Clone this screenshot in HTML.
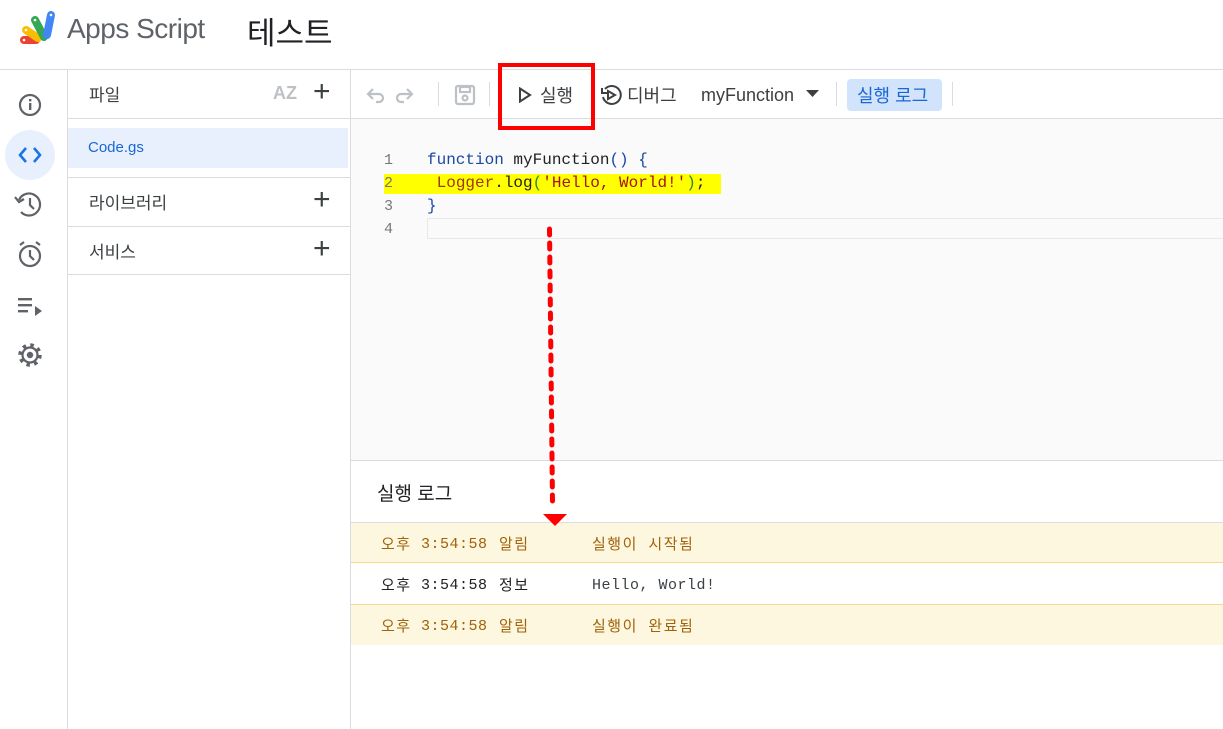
<!DOCTYPE html>
<html><head><meta charset="utf-8"><style>
*{margin:0;padding:0;box-sizing:border-box}
body{width:1223px;height:729px;overflow:hidden;background:#fff;font-family:"Liberation Sans","Noto Sans CJK KR",sans-serif;color:#3c4043;position:relative}
.a{position:absolute}
.mono{font-family:"Liberation Mono","Noto Sans CJK KR",monospace}
.lg{font-size:15px;letter-spacing:1.5px;white-space:pre}
.t{font-size:15px;letter-spacing:0.5px;margin-top:3px}
</style></head><body>
<!-- header -->
<svg class="a" style="left:18px;top:10px" width="44" height="36" viewBox="0 0 44 36">
<g stroke-linecap="round" stroke-width="8" fill="none">
<path d="M6 30h12" stroke="#ea4335"/>
<path d="M8 20l12 8" stroke="#fbbc04"/>
<path d="M17 10l9 17" stroke="#34a853"/>
<path d="M33 5l-4 20" stroke="#4285f4"/>
</g>
<g fill="#fff"><circle cx="6" cy="30" r="1.3"/><circle cx="8" cy="20" r="1.3"/><circle cx="17" cy="10" r="1.3"/><circle cx="33" cy="5" r="1.3"/></g>
</svg>
<div class="a" style="left:67px;top:13px;font-size:28px;color:#5f6368;letter-spacing:-0.5px">Apps Script</div>
<div class="a" style="left:247px;top:8px;font-size:31px;color:#202124">테스트</div>
<div class="a" style="left:0;top:69px;width:1223px;height:1px;background:#dadce0"></div>
<!-- rail -->
<div class="a" style="left:67px;top:69px;width:1px;height:660px;background:#dadce0"></div>
<svg class="a" style="left:0;top:70px" width="67" height="310">
<g fill="none" stroke="#5f6368" stroke-width="2.2">
<circle cx="30" cy="35" r="10"/>
<circle cx="30" cy="186" r="10"/><path d="M30 180v6l4 4M20 175l4-3M40 175l-4-3"/>
<path d="M30 128v7l4 4"/>
<path d="M19 130 A11 11 0 1 1 21 142"/>
</g>
<path d="M15 127l4 5 5-3" fill="none" stroke="#5f6368" stroke-width="2.2"/>
<rect x="29" y="33" width="2.4" height="7" fill="#5f6368"/><rect x="29" y="29" width="2.4" height="2.4" fill="#5f6368"/>
<circle cx="30" cy="85" r="25" fill="#e8f0fe"/>
<path d="M26 78l-6 7 6 7M34 78l6 7-6 7" fill="none" stroke="#1a73e8" stroke-width="2.6"/>
<g fill="#5f6368"><rect x="18" y="228" width="14" height="2.4"/><rect x="18" y="234" width="14" height="2.4"/><rect x="18" y="240" width="10" height="2.4"/><path d="M35 236l7 5-7 5z"/></g>
<g transform="translate(30 285)"><circle r="10" fill="none" stroke="#5f6368" stroke-width="3.5" stroke-dasharray="3.5 4.35"/><circle r="7.5" fill="none" stroke="#5f6368" stroke-width="2.2"/><circle r="3.2" fill="#5f6368"/></g>
</svg>
<!-- file panel -->
<div class="a" style="left:350px;top:69px;width:1px;height:660px;background:#dadce0"></div>
<div class="a" style="left:89px;top:81px;font-size:17px;color:#3c4043">파일</div>
<div class="a" style="left:273px;top:83px;font-size:18px;font-weight:bold;color:#bdc1c6">AZ</div>
<div class="a" style="left:313px;top:75px;font-size:30px;color:#3c4043;font-weight:300">+</div>
<div class="a" style="left:68px;top:118px;width:282px;height:1px;background:#dadce0"></div>
<div class="a" style="left:68px;top:128px;width:280px;height:40px;background:#e8f0fe"></div>
<div class="a" style="left:88px;top:139px;font-size:15px;color:#1967d2">Code.gs</div>
<div class="a" style="left:68px;top:177px;width:282px;height:1px;background:#dadce0"></div>
<div class="a" style="left:89px;top:189px;font-size:17px">라이브러리</div>
<div class="a" style="left:313px;top:183px;font-size:30px">+</div>
<div class="a" style="left:68px;top:226px;width:282px;height:1px;background:#dadce0"></div>
<div class="a" style="left:89px;top:238px;font-size:17px">서비스</div>
<div class="a" style="left:313px;top:232px;font-size:30px">+</div>
<div class="a" style="left:68px;top:274px;width:282px;height:1px;background:#dadce0"></div>
<!-- toolbar -->
<svg class="a" style="left:360px;top:80px" width="130" height="30"><g fill="none" stroke="#bdc1c6" stroke-width="2.2"><path d="M13 9l-5 5 5 5M8 14h11a4 4 0 0 1 0 8h-3"/><path d="M47 9l5 5-5 5M52 14h-11a4 4 0 0 0 0 8h3"/><rect x="96" y="6" width="18" height="18" rx="2"/><rect x="100" y="7" width="10" height="5"/><circle cx="105" cy="18" r="2.5"/></g>
<rect x="78" y="2" width="1" height="24" fill="#dadce0"/></svg>
<div class="a" style="left:489px;top:82px;width:1px;height:24px;background:#dadce0"></div>
<svg class="a" style="left:518px;top:87px" width="14" height="16"><path d="M2 1.5l10 6.5-10 6.5z" fill="none" stroke="#3c4043" stroke-width="2"/></svg>
<div class="a" style="left:540px;top:82px;font-size:18px">실행</div>
<svg class="a" style="left:600px;top:84px" width="22" height="22"><path d="M5 5A9 9 0 1 1 3 13" fill="none" stroke="#3c4043" stroke-width="2"/><path d="M2 4v5h5" fill="none" stroke="#3c4043" stroke-width="2"/><path d="M8 7l7 4-7 4z" fill="none" stroke="#3c4043" stroke-width="2"/></svg>
<div class="a" style="left:627px;top:82px;font-size:18px">디버그</div>
<div class="a" style="left:701px;top:85px;font-size:18px;color:#3c4043;font-weight:500">myFunction</div>
<svg class="a" style="left:806px;top:90px" width="14" height="8"><path d="M0 0h13l-6.5 7z" fill="#3c4043"/></svg>
<div class="a" style="left:836px;top:82px;width:1px;height:24px;background:#dadce0"></div>
<div class="a" style="left:847px;top:79px;width:95px;height:32px;background:#d2e3fc;border-radius:4px"></div>
<div class="a" style="left:857px;top:82px;font-size:18px;color:#1967d2">실행 로그</div>
<div class="a" style="left:952px;top:82px;width:1px;height:24px;background:#dadce0"></div>
<div class="a" style="left:351px;top:118px;width:872px;height:1px;background:#dadce0"></div>
<!-- editor -->
<div class="a" style="left:351px;top:119px;width:872px;height:341px;background:#fafafa"></div>
<div class="a" style="left:384px;top:174px;width:337px;height:20px;background:#ffff00"></div>
<div class="a" style="left:427px;top:218px;width:796px;height:21px;border:1px solid #e8e8e8;border-right:none"></div>
<div class="a mono" style="left:384px;top:149px;font-size:15px;line-height:23px;color:#777">1<br>2<br>3<br>4</div>
<div class="a mono" style="left:427px;top:149px;font-size:16px;line-height:23px;color:#202124;white-space:pre"><span style="color:#1a47a8">function</span> myFunction<span style="color:#1a47a8">() {</span>
 <span style="color:#a0370d">Logger</span>.log<span style="color:#2a8a2a">(</span><span style="color:#a31515">'Hello, World!'</span><span style="color:#2a8a2a">)</span>;
<span style="color:#1a47a8">}</span></div>
<!-- log -->
<div class="a" style="left:351px;top:460px;width:872px;height:1px;background:#dadce0"></div>
<div class="a" style="left:377px;top:479px;font-size:19px;color:#202124">실행 로그</div>
<div class="a" style="left:351px;top:522px;width:872px;height:1px;background:#dadce0"></div>
<div class="a" style="left:351px;top:523px;width:872px;height:40px;background:#fef7e0;border-bottom:1px solid #f6d98b"></div>
<div class="a" style="left:351px;top:604px;width:872px;height:41px;background:#fef7e0;border-top:1px solid #f6d98b"></div>
<div class="a mono lg" style="left:381px;top:533px;color:#a0620a">오후</div>
<div class="a mono t" style="left:421px;top:533px;color:#a0620a">3:54:58</div>
<div class="a mono lg" style="left:499px;top:533px;color:#a0620a">알림</div>
<div class="a mono lg" style="left:592px;top:533px;color:#a0620a">실행이 시작됨</div>
<div class="a mono lg" style="left:381px;top:574px;color:#202124">오후</div>
<div class="a mono t" style="left:421px;top:574px;color:#202124">3:54:58</div>
<div class="a mono lg" style="left:499px;top:574px;color:#202124">정보</div>
<div class="a mono t" style="left:592px;top:574px;color:#3c4043">Hello, World!</div>
<div class="a mono lg" style="left:381px;top:615px;color:#a0620a">오후</div>
<div class="a mono t" style="left:421px;top:615px;color:#a0620a">3:54:58</div>
<div class="a mono lg" style="left:499px;top:615px;color:#a0620a">알림</div>
<div class="a mono lg" style="left:592px;top:615px;color:#a0620a">실행이 완료됨</div>
<!-- arrow -->
<svg class="a" style="left:540px;top:220px" width="30" height="310"><line x1="9.5" y1="9" x2="12.5" y2="282" stroke="#f00" stroke-width="5" stroke-linecap="round" stroke-dasharray="6 8"/><path d="M3 294h24l-12 12z" fill="#f00"/></svg>
<div class="a" style="left:498px;top:63px;width:97px;height:67px;border:4px solid #f00"></div>
</body></html>
